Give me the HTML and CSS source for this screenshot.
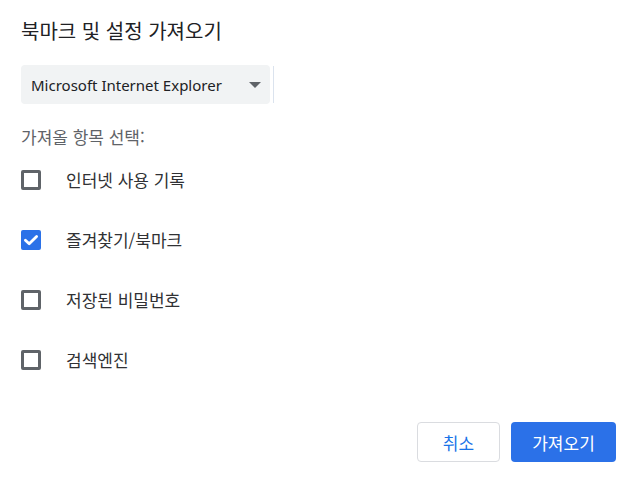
FILE: index.html
```html
<!DOCTYPE html>
<html lang="ko">
<head>
<meta charset="utf-8">
<link rel="stylesheet" href="styles.css">
</head>
<body>
<div class="dialog">
  <h1 class="title">북마크 및 설정 가져오기</h1>
  <div class="select-row">
    <div class="select">
      <span class="select-text">Microsoft Internet Explorer</span>
      <span class="arrow"></span>
    </div>
    <span class="focus-line"></span>
  </div>
  <div class="section-label">가져올 항목 선택:</div>
  <div class="options">
    <label class="option"><span class="box"></span><span class="opt-text">인터넷 사용 기록</span></label>
    <label class="option"><span class="box checked"><svg viewBox="0 0 20 20" width="20" height="20"><path d="M4.4 10.2 L8.2 13.8 L15.6 6.4" fill="none" stroke="#fff" stroke-width="2.8" stroke-linecap="round" stroke-linejoin="round"/></svg></span><span class="opt-text">즐겨찾기/북마크</span></label>
    <label class="option"><span class="box"></span><span class="opt-text">저장된 비밀번호</span></label>
    <label class="option"><span class="box"></span><span class="opt-text">검색엔진</span></label>
  </div>
  <div class="buttons">
    <button class="btn cancel">취소</button>
    <button class="btn primary">가져오기</button>
  </div>
</div>
</body>
</html>
```
FILE: styles.css
```css
html, body {
  margin: 0;
  padding: 0;
  background: #ffffff;
}
body {
  font-family: "Noto Sans CJK KR", "Noto Sans", sans-serif;
  color: #202124;
}
.dialog {
  width: 633px;
  height: 481px;
  box-sizing: border-box;
  padding: 17px 17px 0 21px;
  display: flex;
  flex-direction: column;
}
.title {
  margin: 0;
  font-size: 20px;
  font-weight: 400;
  line-height: 28px;
  color: #202124;
}
.select-row {
  margin-top: 20px;
  display: flex;
  align-items: center;
}
.select {
  width: 249px;
  height: 39px;
  box-sizing: border-box;
  background: #f1f3f4;
  border-radius: 4px;
  display: flex;
  align-items: center;
  justify-content: space-between;
  padding: 0 9px 0 10px;
}
.select-text {
  font-family: "Noto Sans", sans-serif;
  font-size: 15px;
  color: #202124;
}
.arrow {
  width: 0;
  height: 0;
  border-left: 6px solid transparent;
  border-right: 6px solid transparent;
  border-top: 6px solid #5f6368;
}
.focus-line {
  width: 1px;
  height: 37px;
  margin-left: 3px;
  background: #dbe3ee;
}
.section-label {
  margin-top: 22px;
  font-size: 17px;
  line-height: 22px;
  color: #5f6368;
}
.options {
  margin-top: 21px;
  display: flex;
  flex-direction: column;
  gap: 38px;
}
.option {
  display: flex;
  align-items: center;
  height: 22px;
}
.box {
  width: 20px;
  height: 20px;
  box-sizing: border-box;
  border: 3px solid #5f6368;
  border-radius: 2px;
  display: flex;
  align-items: center;
  justify-content: center;
}
.box.checked {
  border: none;
  background: #2b71e8;
}
.opt-text {
  margin-left: 25px;
  font-size: 17px;
  line-height: 22px;
  color: #303134;
}
.buttons {
  margin-top: auto;
  margin-bottom: 19px;
  display: flex;
  justify-content: flex-end;
  gap: 11px;
}
.btn {
  height: 40px;
  border-radius: 4px;
  font-family: "Noto Sans CJK KR", sans-serif;
  font-size: 17px;
  padding: 0;
  cursor: pointer;
}
.cancel {
  width: 83px;
  background: #ffffff;
  border: 1px solid #dadce0;
  color: #1a73e8;
}
.primary {
  width: 105px;
  background: #2b71e8;
  border: none;
  color: #ffffff;
}
```
